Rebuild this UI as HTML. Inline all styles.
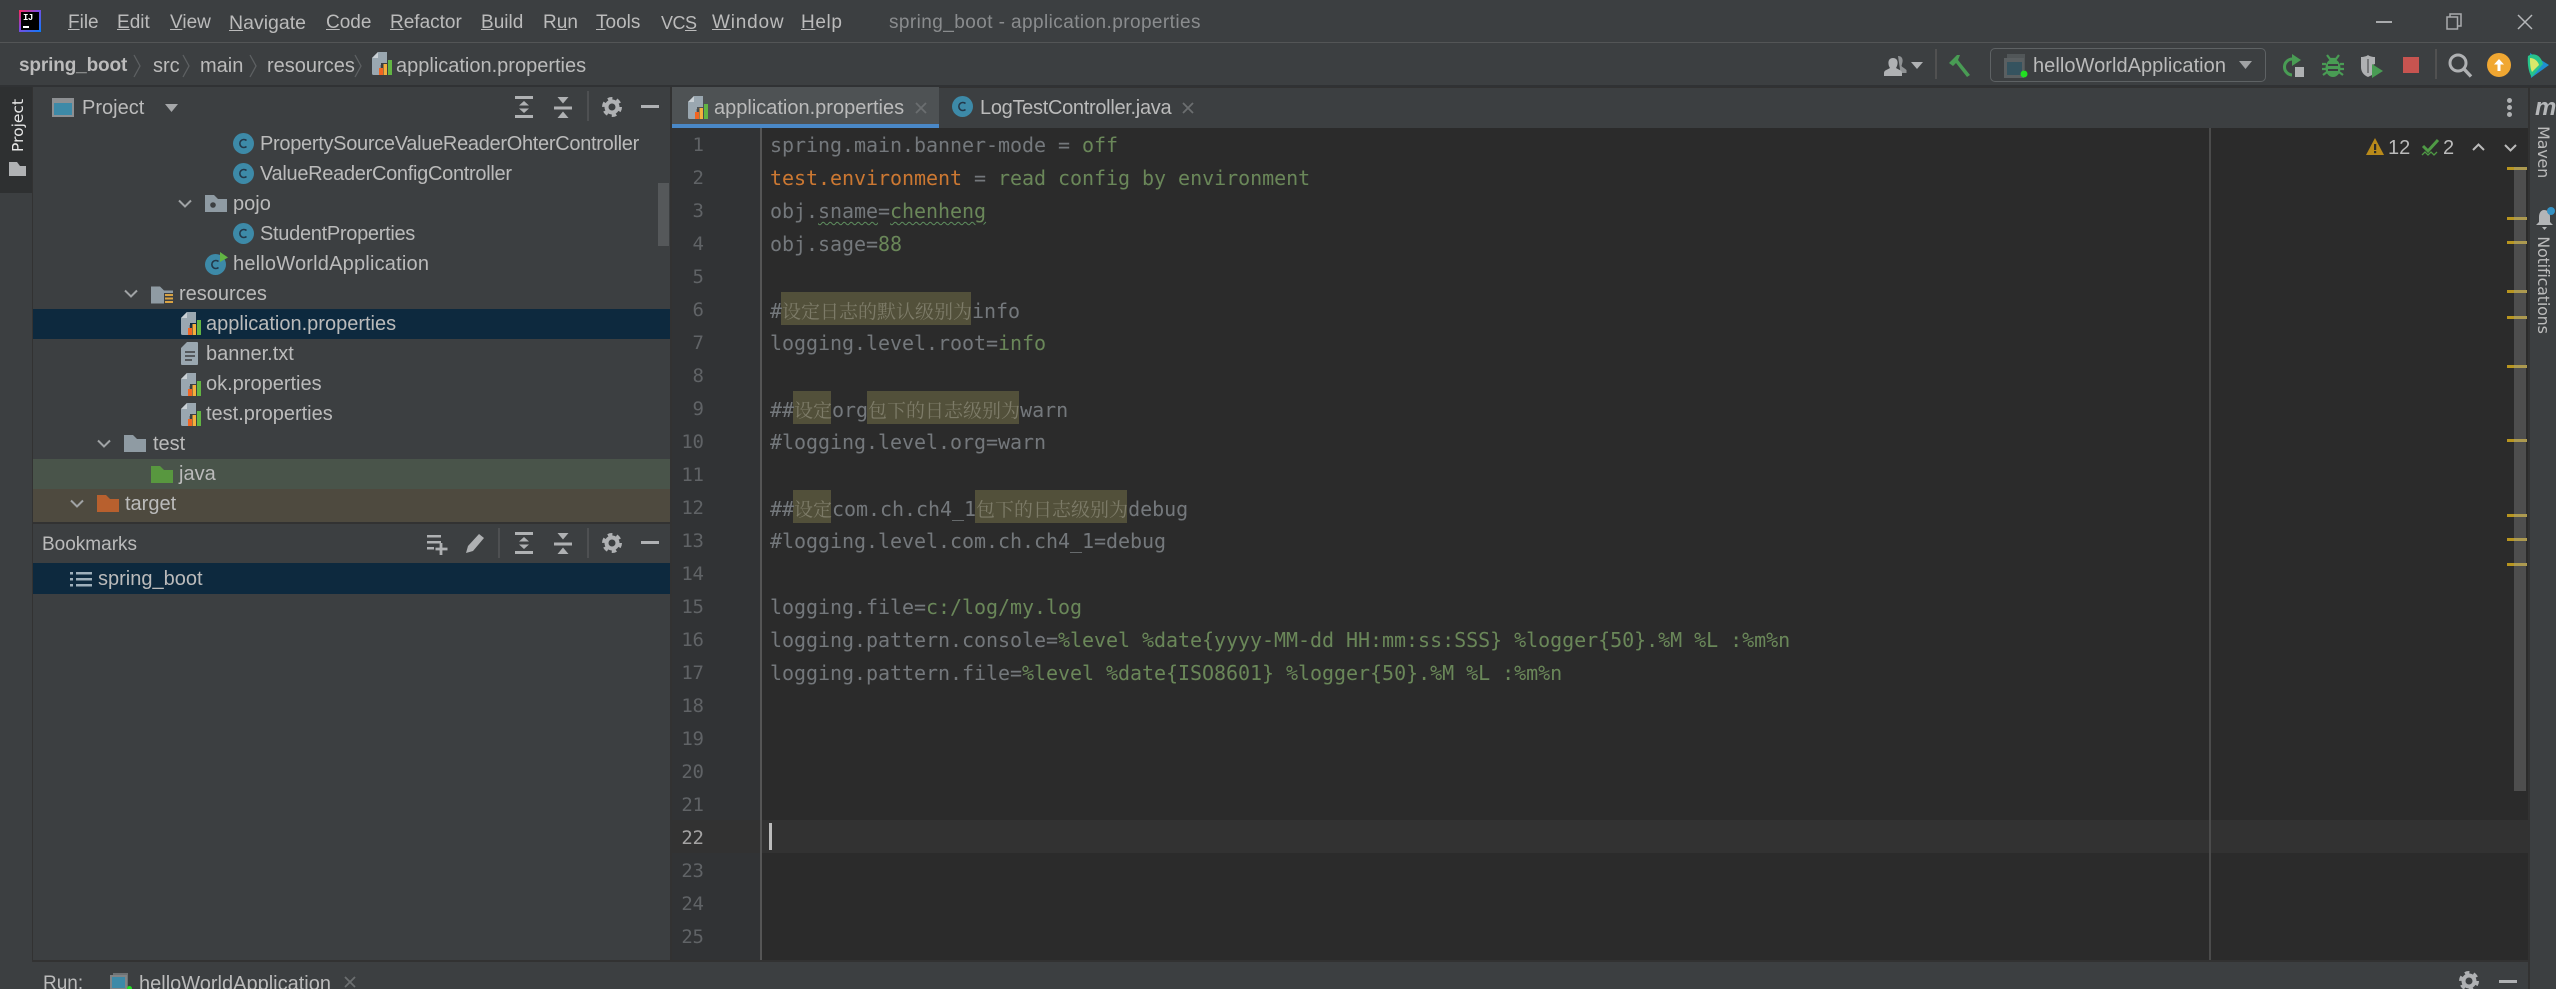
<!DOCTYPE html>
<html><head><meta charset="utf-8"><title>spring_boot - application.properties</title>
<style>
html,body{margin:0;padding:0;background:#3c3f41;}
#a{position:relative;width:2556px;height:989px;overflow:hidden;background:#3c3f41;font-family:"Liberation Sans","Noto Sans CJK SC",sans-serif;color:#bbbbbb;font-size:20px;}
.r{position:absolute;}
.t{position:absolute;white-space:nowrap;line-height:30px;height:30px;margin-top:1px;}
.c{position:absolute;left:770px;height:33px;line-height:37px;white-space:pre;font-family:"DejaVu Sans Mono","Liberation Mono",monospace;font-size:20px;letter-spacing:-.04px;color:#74787c;}
.c b{font-weight:normal;color:#6a8759;}
.c i{font-style:normal;color:#cc7832;}
.c u{text-decoration:underline wavy #5f8f5f 1px;text-underline-offset:3px;}
.c em{font-style:normal;font-family:"Noto Serif CJK SC","Noto Sans CJK SC",serif;font-size:19px;letter-spacing:0;color:#7d7b68;}
.n{position:absolute;left:660px;width:43.500px;text-align:right;height:33px;line-height:37px;font-family:"DejaVu Sans Mono","Liberation Mono",monospace;font-size:19px;letter-spacing:-.4px;color:#606366;}
.h{position:absolute;background:#52503a;height:33px;}
svg{position:absolute;overflow:visible;}
.m{position:absolute;left:2507px;width:20px;height:3px;background:#b8951f;}
.m:after{content:"";position:absolute;left:7px;right:0;top:0;bottom:0;background:#ad9a50;}
</style></head><body><div id="a">
<svg width="0" height="0" style="position:absolute"><defs>
<symbol id="prop" viewBox="0 0 20 23"><path d="M6 0h9v11H9v12H1.500a1.500 1.500 0 0 1-1.500-1.500V6z" fill="#9aa7b0"/><path d="M6 0v6H0z" fill="#c9d0d5"/><path d="M8 13h12v10H8z" fill="#3c3f41" opacity=".3"/><rect x="7" y="16" width="4" height="7" fill="#f26522"/><rect x="11.500" y="12" width="3.500" height="11" fill="#f4af3d"/><rect x="16" y="8" width="4" height="15" fill="#62b543"/></symbol>
<symbol id="cc" viewBox="0 0 21 21"><circle cx="10.500" cy="10.500" r="10.500" fill="#3d8aa8"/><path d="M13.500 7.500a4 4 0 1 0 0 6" fill="none" stroke="#23384a" stroke-width="1.600"/></symbol>
<symbol id="gear" viewBox="0 0 20 20"><circle cx="10" cy="10" r="5.500" fill="none" stroke="#afb1b3" stroke-width="4"/><circle cx="10" cy="10" r="8.300" fill="none" stroke="#afb1b3" stroke-width="3.400" stroke-dasharray="4.500 4.190"/></symbol>
<symbol id="exp" viewBox="0 0 18 22"><rect y="0" width="18" height="3" fill="#afb1b3"/><rect y="19" width="18" height="3" fill="#afb1b3"/><path d="M9 5l5 4.500H4zM9 17l5-4.500H4z" fill="#afb1b3"/></symbol>
<symbol id="col" viewBox="0 0 18 22"><rect y="9.500" width="18" height="3" fill="#afb1b3"/><path d="M3.500 0h11L9 6.500zM3.500 21h11L9 14.500z" fill="#afb1b3"/></symbol>
<symbol id="chev" viewBox="0 0 14 10"><path d="M1 1.500l6 6 6-6" fill="none" stroke="#a0a3a5" stroke-width="2"/></symbol>
<symbol id="fold" viewBox="0 0 22 17"><path d="M0 0h9l4 4h9v13H0z"/></symbol>
<symbol id="run" viewBox="0 0 22 20"><path d="M3 3h15v15H3z" fill="#6e7274"/><path d="M0 5h17v15H0z" fill="#818486"/><path d="M2 7h13v11H2z" fill="#3d8aa8"/></symbol>
<symbol id="x" viewBox="0 0 12 12"><path d="M1 1l10 10M11 1L1 11" stroke="#6b6e70" stroke-width="1.800" fill="none"/></symbol>
</defs></svg>

<!-- bars -->
<div class="r" style="left:0;top:42px;width:2556px;height:1px;background:#535556"></div>
<div class="r" style="left:0;top:85px;width:2556px;height:2px;background:#303234"></div>
<div class="r" style="left:0;top:87px;width:33px;height:106px;background:#2e3031"></div>
<div class="r" style="left:32px;top:87px;width:1px;height:875px;background:#323232"></div>
<div class="r" style="left:670px;top:87px;width:2px;height:875px;background:#323232"></div>

<!-- logo -->
<div class="r" style="left:19px;top:10px;width:22px;height:22px;background:linear-gradient(135deg,#fe2857 0%,#7b4be0 45%,#087cfa 100%)"></div>
<div class="r" style="left:21px;top:12px;width:18px;height:18px;background:#000"></div>
<div class="r" style="left:23px;top:12px;font:bold 9px/12px 'Liberation Mono',monospace;color:#fff;letter-spacing:-.5px">IJ</div>
<div class="r" style="left:23px;top:26px;width:6px;height:2px;background:#fff"></div>

<!-- menu -->
<div class="t" style="left:68px;top:7px;font-size:19px"><u>F</u>ile</div>
<div class="t" style="left:117px;top:7px;font-size:19px"><u>E</u>dit</div>
<div class="t" style="left:170px;top:7px;font-size:19px"><u>V</u>iew</div>
<div class="t" style="left:229px;top:7px;font-size:19.500px"><u>N</u>avigate</div>
<div class="t" style="left:326px;top:7px;font-size:19px"><u>C</u>ode</div>
<div class="t" style="left:390px;top:7px;font-size:19px"><u>R</u>efactor</div>
<div class="t" style="left:481px;top:7px;font-size:19px"><u>B</u>uild</div>
<div class="t" style="left:543px;top:7px;font-size:19px">R<u>u</u>n</div>
<div class="t" style="left:596px;top:7px;font-size:19px"><u>T</u>ools</div>
<div class="t" style="left:661px;top:7px;font-size:18px;letter-spacing:-.5px">VC<u>S</u></div>
<div class="t" style="left:712px;top:7px;font-size:19px;letter-spacing:.8px"><u>W</u>indow</div>
<div class="t" style="left:801px;top:7px;font-size:19px;letter-spacing:.6px"><u>H</u>elp</div>
<div class="t" style="left:889px;top:7px;font-size:19px;letter-spacing:.42px;color:#8a8c8e">spring_boot - application.properties</div>

<!-- window controls -->
<div class="r" style="left:2376px;top:21px;width:16px;height:2px;background:#a9abad"></div>
<svg style="left:2446px;top:13px" width="16" height="17"><path d="M4 3.500V1h11v12h-3" fill="none" stroke="#a9abad" stroke-width="1.500"/><rect x="1" y="4" width="10.500" height="12" fill="none" stroke="#a9abad" stroke-width="1.500"/></svg>
<svg style="left:2517px;top:14px" width="16" height="16"><path d="M1 1l14 14M15 1L1 15" stroke="#b5b7b9" stroke-width="1.500" fill="none"/></svg>

<!-- breadcrumb -->
<div class="t" style="left:19px;top:50px;font-weight:bold;font-size:19px;letter-spacing:-.15px;color:#bbb">spring_boot</div>
<svg style="left:133px;top:54px" width="9" height="24"><path d="M1 1l6 11-6 11" fill="none" stroke="#5d6062" stroke-width="1.300"/></svg>
<div class="t" style="left:153px;top:50px">src</div>
<svg style="left:182px;top:54px" width="9" height="24"><path d="M1 1l6 11-6 11" fill="none" stroke="#5d6062" stroke-width="1.300"/></svg>
<div class="t" style="left:200px;top:50px">main</div>
<svg style="left:249px;top:54px" width="9" height="24"><path d="M1 1l6 11-6 11" fill="none" stroke="#5d6062" stroke-width="1.300"/></svg>
<div class="t" style="left:267px;top:50px">resources</div>
<svg style="left:354px;top:54px" width="9" height="24"><path d="M1 1l6 11-6 11" fill="none" stroke="#5d6062" stroke-width="1.300"/></svg>
<svg style="left:372px;top:52px" width="20" height="23"><use href="#prop"/></svg>
<div class="t" style="left:396px;top:50px">application.properties</div>

<!-- right toolbar -->
<svg style="left:1884px;top:54px" width="24" height="24" viewBox="0 0 24 24"><path d="M14 2c4 0 5 3 4.500 6l-1 4c1 1.500 3 2 5 4v3h-6z" fill="#8f9294"/><path d="M9 4c3.500 0 5 2.500 4.500 6-.3 2-1 3-1.500 4 2 1.500 6 2 6 5v3H0v-3c0-3 4-3.500 6-5-.5-1-1.300-2-1.500-4C4 6.500 5.500 4 9 4z" fill="#afb1b3"/></svg>
<svg style="left:1911px;top:62px" width="12" height="8"><path d="M0 0h12L6 7z" fill="#afb1b3"/></svg>
<div class="r" style="left:1935px;top:49px;width:2px;height:30px;background:#515151"></div>
<svg style="left:1948px;top:54px" width="24" height="24" viewBox="0 0 24 24"><path d="M1 9l8-8h3l-2 5 12 15-3 2L8 9l-3 3z" fill="#499c54"/></svg>
<div class="r" style="left:1990px;top:48px;width:274px;height:32px;border:1.500px solid #5e6264;border-radius:5px"></div>
<svg style="left:2004px;top:54px" width="24" height="25" viewBox="0 0 24 25"><rect x="3" y="0" width="18" height="16" fill="#515658"/><rect x="0" y="4" width="20" height="20" fill="#5a5f61"/><rect x="3" y="8" width="15" height="13" fill="#35535f"/><circle cx="20" cy="20" r="3.500" fill="#22e022"/></svg>
<div class="t" style="left:2033px;top:50px;letter-spacing:.05px">helloWorldApplication</div>
<svg style="left:2239px;top:61px" width="13" height="9"><path d="M0 0h13L6.500 8z" fill="#a0a2a4"/></svg>
<svg style="left:2283px;top:54px" width="24" height="24" viewBox="0 0 24 24"><path d="M10 5a8 8 0 1 0-1 16" fill="none" stroke="#499c54" stroke-width="3"/><path d="M9 0l9 6-9 6z" fill="#499c54"/><rect x="12" y="13" width="9" height="10" fill="#afb1b3"/></svg>
<svg style="left:2322px;top:54px" width="22" height="24" viewBox="0 0 22 24"><path d="M5 1l3 4h6l3-4M0 10h4M18 10h4M0 15h4M18 15h4M1 21l4-3M21 21l-4-3" stroke="#499c54" stroke-width="2.200" fill="none"/><ellipse cx="11" cy="14" rx="7.500" ry="9" fill="#499c54"/><path d="M6 11h10M6 16h10" stroke="#3c3f41" stroke-width="2"/></svg>
<svg style="left:2360px;top:55px" width="25" height="24" viewBox="0 0 25 24"><path d="M1 2c3 0 6-1 7-2 1 1 4 2 7 2v7l-3 1v10l-4 2c-5-2-7-6-7-10z" fill="#afb1b3"/><path d="M8 4v14" stroke="#3c3f41" stroke-width="1"/><path d="M12 9l11 7-11 7z" fill="#499c54"/></svg>
<div class="r" style="left:2403px;top:57px;width:16px;height:16px;background:#c75450"></div>
<div class="r" style="left:2435px;top:49px;width:2px;height:30px;background:#515151"></div>
<svg style="left:2448px;top:53px" width="24" height="25"><circle cx="10" cy="10" r="8" fill="none" stroke="#afb1b3" stroke-width="3"/><path d="M16 16l7 7.500" stroke="#afb1b3" stroke-width="3.400"/></svg>
<div class="r" style="left:2487px;top:53px;width:24px;height:24px;border-radius:50%;background:#f0a732"></div>
<svg style="left:2493px;top:58px" width="12" height="14"><path d="M6 1L1 6.500h3.500V13h3V6.500H11z" fill="#fff"/></svg>
<svg style="left:2527px;top:53px" width="22" height="25" viewBox="0 0 22 25"><path d="M3 0l19 12L4 25z" fill="#1f8fd0"/><path d="M1 3C8-1 14 3 16 11L5 24C2 21 0 11 1 3z" fill="#27c48b"/><path d="M3 5c4 0 8 3 9 7l-7 7C3 15 3 9 3 5z" fill="#d8e86a"/></svg>

<!-- left tool strip -->
<div class="t" style="left:-8px;top:113px;font-size:15.500px;color:#e8e8e8;font-family:'DejaVu Sans',sans-serif;transform:rotate(-90deg);width:52px;height:26px;line-height:26px;margin-top:0;text-align:center">Project</div>
<svg style="left:9px;top:162px" width="17" height="14"><path d="M0 0h8l3 4h6v10H0z" fill="#b0b2b4"/></svg>

<!-- project panel -->
<svg style="left:52px;top:98px" width="22" height="19"><rect width="22" height="19" fill="#8d9093"/><rect x="2" y="5" width="18" height="12" fill="#3d8aa8"/></svg>
<div class="t" style="left:82px;top:92px">Project</div>
<svg style="left:165px;top:104px" width="13" height="9"><path d="M0 0h13L6.500 8z" fill="#a5a7a9"/></svg>
<svg style="left:515px;top:96px" width="18" height="22"><use href="#exp"/></svg>
<svg style="left:554px;top:97px" width="18" height="22"><use href="#col"/></svg>
<div class="r" style="left:587px;top:91px;width:2px;height:30px;background:#4e5052"></div>
<svg style="left:602px;top:97px" width="20" height="20"><use href="#gear"/></svg>
<div class="r" style="left:641px;top:105px;width:18px;height:3px;background:#afb1b3"></div>

<div class="r" style="left:33px;top:309px;width:637px;height:30px;background:#0d293e"></div>
<div class="r" style="left:33px;top:459px;width:637px;height:30px;background:#49544a"></div>
<div class="r" style="left:33px;top:489px;width:637px;height:33px;background:#4e4a3f"></div>
<div class="r" style="left:658px;top:183px;width:11px;height:63px;background:#55585a"></div>

<svg style="left:233px;top:133px" width="21" height="21"><use href="#cc"/></svg>
<div class="t" style="left:260px;top:128px;letter-spacing:-.3px">PropertySourceValueReaderOhterController</div>
<svg style="left:233px;top:163px" width="21" height="21"><use href="#cc"/></svg>
<div class="t" style="left:260px;top:158px;letter-spacing:-.3px">ValueReaderConfigController</div>
<svg style="left:178px;top:199px" width="14" height="10"><use href="#chev"/></svg>
<svg style="left:205px;top:195px" width="22" height="17"><use href="#fold" fill="#8f9ba3"/><circle cx="8" cy="10" r="2.800" fill="#3c3f41"/></svg>
<div class="t" style="left:233px;top:188px">pojo</div>
<svg style="left:233px;top:223px" width="21" height="21"><use href="#cc"/></svg>
<div class="t" style="left:260px;top:218px;letter-spacing:-.3px">StudentProperties</div>
<svg style="left:205px;top:254px" width="21" height="21"><use href="#cc"/></svg>
<svg style="left:220px;top:252px" width="9" height="11"><path d="M0 0l8 5.500L0 10z" fill="#62b543"/></svg>
<div class="t" style="left:233px;top:248px;letter-spacing:.2px">helloWorldApplication</div>
<svg style="left:124px;top:289px" width="14" height="10"><use href="#chev"/></svg>
<svg style="left:151px;top:285px" width="22" height="20"><use href="#fold" fill="#8f9ba3"/><rect x="13" y="8" width="9" height="12" fill="#3c3f41"/><path d="M14 10h8M14 13.500h8M14 17h8" stroke="#d9a343" stroke-width="2"/></svg>
<div class="t" style="left:179px;top:278px">resources</div>
<svg style="left:181px;top:312px" width="20" height="23"><use href="#prop"/></svg>
<div class="t" style="left:206px;top:308px">application.properties</div>
<svg style="left:181px;top:342px" width="17" height="23" viewBox="0 0 17 23"><path d="M6 0h10a1 1 0 0 1 1 1v21a1 1 0 0 1-1 1H1a1 1 0 0 1-1-1V6z" fill="#9aa7b0"/><path d="M4 10h10M4 14h10M4 18h7" stroke="#3c3f41" stroke-width="1.500"/></svg>
<div class="t" style="left:206px;top:338px">banner.txt</div>
<svg style="left:181px;top:373px" width="20" height="23"><use href="#prop"/></svg>
<div class="t" style="left:206px;top:368px">ok.properties</div>
<svg style="left:181px;top:403px" width="20" height="23"><use href="#prop"/></svg>
<div class="t" style="left:206px;top:398px">test.properties</div>
<svg style="left:97px;top:439px" width="14" height="10"><use href="#chev"/></svg>
<svg style="left:124px;top:435px" width="22" height="17"><use href="#fold" fill="#8f9ba3"/></svg>
<div class="t" style="left:153px;top:428px">test</div>
<svg style="left:151px;top:466px" width="22" height="17"><use href="#fold" fill="#58973f"/></svg>
<div class="t" style="left:179px;top:458px">java</div>
<svg style="left:70px;top:499px" width="14" height="10"><use href="#chev"/></svg>
<svg style="left:97px;top:495px" width="22" height="17"><use href="#fold" fill="#b8602e"/></svg>
<div class="t" style="left:125px;top:488px">target</div>

<!-- bookmarks -->
<div class="r" style="left:33px;top:522px;width:637px;height:2px;background:#323232"></div>
<div class="t" style="left:42px;top:529px;font-size:19px">Bookmarks</div>
<svg style="left:427px;top:534px" width="21" height="21"><path d="M0 1h14v2.500H0zM0 7h14v2.500H0zM0 13h7v2.500H0z" fill="#afb1b3"/><path d="M14 9v12M8.500 15h12" stroke="#afb1b3" stroke-width="2.800"/></svg>
<svg style="left:465px;top:533px" width="20" height="21"><path d="M14 1l5 4-11 13-7 2 2-7z" fill="#afb1b3"/></svg>
<div class="r" style="left:498px;top:528px;width:2px;height:30px;background:#4e5052"></div>
<svg style="left:515px;top:532px" width="18" height="22"><use href="#exp"/></svg>
<svg style="left:554px;top:533px" width="18" height="22"><use href="#col"/></svg>
<div class="r" style="left:587px;top:528px;width:2px;height:30px;background:#4e5052"></div>
<svg style="left:602px;top:533px" width="20" height="20"><use href="#gear"/></svg>
<div class="r" style="left:641px;top:541px;width:18px;height:3px;background:#afb1b3"></div>
<div class="r" style="left:33px;top:563px;width:637px;height:31px;background:#0d293e"></div>
<svg style="left:70px;top:571px" width="22" height="16"><path d="M0 1h3v2.500H0zM6 1h16v2.500H6zM0 7h3v2.500H0zM6 7h16v2.500H6zM0 13h3v2.500H0zM6 13h16v2.500H6z" fill="#9fb0bb"/></svg>
<div class="t" style="left:98px;top:563px">spring_boot</div>

<!-- tabs -->
<div class="r" style="left:672px;top:87px;width:1855px;height:41px;background:#3c3f41"></div>
<div class="r" style="left:672px;top:87px;width:1884px;height:1px;background:#323232"></div>
<div class="r" style="left:672px;top:87px;width:267px;height:37px;background:#4e5254"></div>
<div class="r" style="left:672px;top:124px;width:267px;height:5px;background:#4a88c7"></div>
<svg style="left:688px;top:96px" width="20" height="23"><use href="#prop"/></svg>
<div class="t" style="left:714px;top:92px">application.properties</div>
<svg style="left:915px;top:102px" width="12" height="12"><use href="#x"/></svg>
<svg style="left:952px;top:96px" width="21" height="21"><use href="#cc"/></svg>
<div class="t" style="left:980px;top:92px;letter-spacing:-.3px">LogTestController.java</div>
<svg style="left:1182px;top:102px" width="12" height="12"><use href="#x"/></svg>
<div class="r" style="left:2507px;top:98px;width:5px;height:5px;border-radius:50%;background:#afb1b3"></div>
<div class="r" style="left:2507px;top:105px;width:5px;height:5px;border-radius:50%;background:#afb1b3"></div>
<div class="r" style="left:2507px;top:112px;width:5px;height:5px;border-radius:50%;background:#afb1b3"></div>

<!-- editor -->
<div class="r" style="left:672px;top:128px;width:89px;height:832px;background:#313335"></div>
<div class="r" style="left:761px;top:128px;width:1767px;height:832px;background:#2b2b2b"></div>
<div class="r" style="left:672px;top:820px;width:1856px;height:33px;background:#323232"></div>
<div class="r" style="left:760px;top:128px;width:2px;height:832px;background:#555"></div>
<div class="r" style="left:2209px;top:128px;width:2px;height:832px;background:#4b4b4b"></div>
<div class="r" style="left:769px;top:823px;width:3px;height:27px;background:#bbbbbb"></div>

<div class="h" style="left:781px;top:292px;width:190px"></div>
<div class="h" style="left:793px;top:391px;width:38px"></div>
<div class="h" style="left:867px;top:391px;width:152px"></div>
<div class="h" style="left:793px;top:490px;width:38px"></div>
<div class="h" style="left:975px;top:490px;width:152px"></div>

<div class="n" style="top:127px">1</div><div class="n" style="top:160px">2</div><div class="n" style="top:193px">3</div><div class="n" style="top:226px">4</div><div class="n" style="top:259px">5</div><div class="n" style="top:292px">6</div><div class="n" style="top:325px">7</div><div class="n" style="top:358px">8</div><div class="n" style="top:391px">9</div><div class="n" style="top:424px">10</div><div class="n" style="top:457px">11</div><div class="n" style="top:490px">12</div><div class="n" style="top:523px">13</div><div class="n" style="top:556px">14</div><div class="n" style="top:589px">15</div><div class="n" style="top:622px">16</div><div class="n" style="top:655px">17</div><div class="n" style="top:688px">18</div><div class="n" style="top:721px">19</div><div class="n" style="top:754px">20</div><div class="n" style="top:787px">21</div><div class="n" style="top:820px;color:#a4a3a3">22</div><div class="n" style="top:853px">23</div><div class="n" style="top:886px">24</div><div class="n" style="top:919px">25</div>

<div class="c" style="top:127px">spring.main.banner-mode = <b>off</b></div>
<div class="c" style="top:160px"><i>test.environment</i> = <b>read config by environment</b></div>
<div class="c" style="top:193px">obj.<u>sname</u>=<b><u>chenheng</u></b></div>
<div class="c" style="top:226px">obj.sage=<b>88</b></div>
<div class="c" style="top:292px">#<em>设定日志的默认级别为</em>info</div>
<div class="c" style="top:325px">logging.level.root=<b>info</b></div>
<div class="c" style="top:391px">##<em>设定</em>org<em>包下的日志级别为</em>warn</div>
<div class="c" style="top:424px">#logging.level.org=warn</div>
<div class="c" style="top:490px">##<em>设定</em>com.ch.ch4_1<em>包下的日志级别为</em>debug</div>
<div class="c" style="top:523px">#logging.level.com.ch.ch4_1=debug</div>
<div class="c" style="top:589px">logging.file=<b>c:/log/my.log</b></div>
<div class="c" style="top:622px">logging.pattern.console=<b>%level %date{yyyy-MM-dd HH:mm:ss:SSS} %logger{50}.%M %L :%m%n</b></div>
<div class="c" style="top:655px">logging.pattern.file=<b>%level %date{ISO8601} %logger{50}.%M %L :%m%n</b></div>

<!-- inspections -->
<svg style="left:2366px;top:138px" width="18" height="17"><path d="M9 0l9 17H0z" fill="#b98a1a"/><rect x="8" y="6" width="2.200" height="6" fill="#2b2b2b"/><rect x="8" y="13" width="2.200" height="2.200" fill="#2b2b2b"/></svg>
<div class="t" style="left:2388px;top:132px;font-size:20px">12</div>
<svg style="left:2422px;top:139px" width="18" height="18"><path d="M1 7l5 5L16 1" fill="none" stroke="#4f9a45" stroke-width="3"/><path d="M0 16l3-3 3 3 3-3 3 3 3-3" fill="none" stroke="#4f9a45" stroke-width="1.300"/></svg>
<div class="t" style="left:2443px;top:132px;font-size:20px">2</div>
<svg style="left:2472px;top:143px" width="13" height="8"><path d="M1 7l5.500-5.500L12 7" fill="none" stroke="#bbb" stroke-width="2"/></svg>
<svg style="left:2504px;top:144px" width="13" height="8"><path d="M1 1l5.500 5.500L12 1" fill="none" stroke="#bbb" stroke-width="2"/></svg>

<!-- editor scrollbar + marks -->
<div class="r" style="left:2514px;top:167px;width:12px;height:624px;background:#4e4e4e"></div>
<div class="m" style="top:167px"></div><div class="m" style="top:217px"></div><div class="m" style="top:241px"></div><div class="m" style="top:290px"></div><div class="m" style="top:316px"></div><div class="m" style="top:365px"></div><div class="m" style="top:439px"></div><div class="m" style="top:514px"></div><div class="m" style="top:538px"></div><div class="m" style="top:563px"></div>

<!-- right strip -->
<div class="r" style="left:2528px;top:87px;width:2px;height:902px;background:#323232"></div>
<div class="r" style="left:2535px;top:93px;font:italic bold 24px/30px 'Liberation Sans',sans-serif;color:#b5b7b9">m</div>
<div class="t" style="left:2518px;top:138px;width:50px;height:26px;line-height:26px;text-align:center;font-size:16px;font-family:'DejaVu Sans',sans-serif;letter-spacing:-.2px;transform:rotate(90deg);margin-top:0">Maven</div>
<svg style="left:2536px;top:207px" width="20" height="25"><path d="M8 3c4 0 6 3 6 7v5l3 3H0l3-3v-5c0-4 2-7 5-7z" fill="#b3b5b7"/><path d="M6 20h5l-2.500 3z" fill="#b3b5b7"/><circle cx="15" cy="4" r="4" fill="#3592c4"/></svg>
<div class="t" style="left:2490px;top:272px;width:106px;height:26px;line-height:26px;text-align:center;font-size:16px;font-family:'DejaVu Sans',sans-serif;letter-spacing:-.2px;transform:rotate(90deg);margin-top:0">Notifications</div>

<!-- bottom -->
<div class="r" style="left:33px;top:960px;width:2495px;height:2px;background:#323232"></div>
<div class="t" style="left:43px;top:968px;font-size:19px">Run:</div>
<svg style="left:110px;top:970px" width="22" height="20"><use href="#run"/></svg>
<div class="r" style="left:127px;top:986px;width:5px;height:5px;border-radius:50%;background:#22e022"></div>
<div class="t" style="left:139px;top:968px">helloWorldApplication</div>
<svg style="left:344px;top:976px" width="12" height="12"><use href="#x"/></svg>
<svg style="left:2459px;top:971px" width="20" height="20"><use href="#gear"/></svg>
<div class="r" style="left:2499px;top:980px;width:18px;height:3px;background:#afb1b3"></div>
</div></body></html>
